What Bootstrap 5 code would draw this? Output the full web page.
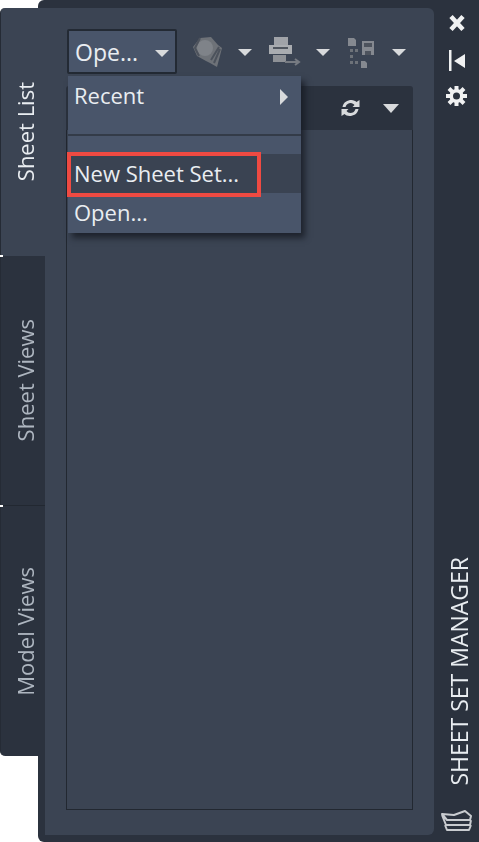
<!DOCTYPE html>
<html lang="en">
<head>
    <meta charset="UTF-8">
    <meta name="viewport" content="width=device-width, initial-scale=1.0">
    <title>Sheet Set Manager</title>
    <link rel="stylesheet" href="https://cdn.jsdelivr.net/npm/bootstrap@5.3.0/dist/css/bootstrap.min.css">
    <style>
        html, body {
            height: 100%;
            background: #fff;
            overflow: hidden;
        }

        body {
            font-family: "Open Sans", "Noto Sans", sans-serif;
            color: #e9edf1;
        }

        .ssm-frame {
            height: 842px;
            margin-left: 38px;
            background: #2b323e;
            border-radius: 6px 0 0 6px;
        }

        .ssm-tabs {
            width: 45px;
            margin-left: -38px;
            margin-top: 8px;
            flex: none;
        }

        .ssm-tab {
            position: relative;
            height: 250px;
            padding-left: 4px;
            background: #2b323e;
            border-bottom: 1px solid #222831;
            color: #aeb6c0;
            font-size: 22px;
            border-left: 1px solid #252b35;
        }

        .ssm-tab span {
            writing-mode: vertical-rl;
            transform: rotate(180deg);
        }

        .ssm-tab::before {
            content: "";
            position: absolute;
            left: -1px;
            top: -1px;
            width: 3px;
            height: 2px;
            background: #fff;
        }

        .ssm-tab.active-tab {
            height: 248px;
            background: #3b4453;
            color: #e9edf1;
            border-radius: 5px 0 0 0;
            border-bottom: 0;
        }

        .ssm-tab.active-tab::before {
            display: none;
        }

        .ssm-tab.last-tab {
            border-radius: 0 0 0 5px;
            border-bottom: 0;
        }

        .ssm-panel {
            position: relative;
            margin: 8px 0 7px;
            padding: 21px 21px 25px;
            background: #3b4453;
            border-radius: 0 6px 6px 0;
            min-width: 0;
        }

        .ssm-open {
            width: 110px;
            height: 45px;
            margin-left: 1px;
            padding: 2px 6px 0 6px;
            background: #49556a;
            border: 2px solid #232a34;
            border-radius: 2px;
            color: #e9edf1;
            font-size: 23px;
            line-height: 1;
            flex: none;
        }

        .ssm-caret {
            width: 0;
            height: 0;
            margin-top: 2px;
            border-left: 7px solid transparent;
            border-right: 7px solid transparent;
            border-top: 7px solid #d8dadc;
            flex: none;
        }

        .ssm-caret.big {
            margin-top: 0;
            border-left-width: 8px;
            border-right-width: 8px;
            border-top-width: 9px;
        }

        .ssm-tool {
            display: block;
            flex: none;
            filter: blur(.7px);
        }

        .ssm-gap-a { margin-left: 15px; }
        .ssm-gap-b { margin-left: 14px; }
        .ssm-gap-c { margin-left: 17px; }

        .ssm-list-head {
            height: 44px;
            margin-top: 12px;
            padding-right: 14px;
            background: #2b323e;
            border-radius: 3px 3px 0 0;
            gap: 21px;
        }

        .ssm-list-body {
            border: 1px solid #222831;
            border-top: 0;
            background: #3b4453;
        }

        .ssm-menu.dropdown-menu {
            display: block;
            top: 68px;
            left: 23px;
            width: 233px;
            height: 157px;
            padding: 0;
            margin: 0;
            background: #49556a;
            border: 0;
            border-radius: 0;
            box-shadow: 4px 5px 6px rgba(20, 24, 32, .75);
            font-size: 22px;
        }

        .ssm-menu .dropdown-item {
            height: 39px;
            padding: 0 5px 0 6px;
            color: #e9edf1;
            line-height: 39px;
        }

        .ssm-menu .ssm-recent {
            height: 58px;
            line-height: 40px;
            margin-top: -1px;
        }

        .ssm-menu .ssm-gap {
            height: 18px;
        }

        .ssm-menu .ssm-hover {
            position: relative;
            background: #3a4352;
        }

        .ssm-menu .dropdown-divider {
            margin: 1px 0 0;
            border-top: 2px solid #333b48;
            opacity: 1;
        }

        .ssm-arrow {
            width: 0;
            height: 0;
            margin: 14px 8px 0 0;
            border-top: 8px solid transparent;
            border-bottom: 8px solid transparent;
            border-left: 8px solid #d8dadc;
        }

        .ssm-redbox {
            position: absolute;
            left: -1px;
            top: -2px;
            width: 194px;
            height: 45px;
            border: 4px solid #ef4a42;
            pointer-events: none;
        }

        .ssm-strip {
            width: 45px;
            padding: 15px 0 10px;
            flex: none;
        }

        .ssm-strip-gear {
            margin-top: 15px;
        }

        .ssm-strip-pin {
            margin-top: 19px;
        }

        .ssm-title {
            writing-mode: vertical-rl;
            transform: rotate(180deg);
            margin-left: 5px;
            font-size: 23px;
            line-height: 1;
            color: #e9edf1;
            white-space: nowrap;
        }

        .ssm-stack {
            margin-top: 24px;
            filter: blur(.5px);
        }
    </style>
</head>
<body>
    <div class="ssm-frame d-flex">
        <div class="ssm-tabs d-flex flex-column">
            <div class="ssm-tab active-tab d-flex align-items-center justify-content-center"><span>Sheet List</span></div>
            <div class="ssm-tab d-flex align-items-center justify-content-center"><span>Sheet Views</span></div>
            <div class="ssm-tab last-tab d-flex align-items-center justify-content-center"><span>Model Views</span></div>
        </div>

        <div class="ssm-panel flex-grow-1 d-flex flex-column">
            <div class="d-flex align-items-center">
                <button type="button" class="ssm-open btn d-flex align-items-center justify-content-between">
                    <span>Ope...</span><i class="ssm-caret"></i>
                </button>
                <svg class="ssm-tool ssm-gap-a" width="32" height="32" viewBox="0 0 32 32">
                    <path d="M1 11 8 2l11-1 7 8 4 3-5 19-7-4-4-2-9-5z" fill="#6e7278"/>
                    <circle cx="13" cy="12" r="8" fill="#7f8389"/>
                    <path d="M8 2 3 12l4 8M19 24l8-13M22 27l6-14" fill="none" stroke="#4c525c" stroke-width="2"/>
                </svg>
                <i class="ssm-caret ssm-gap-b"></i>
                <svg class="ssm-tool ssm-gap-c" width="32" height="32" viewBox="0 0 32 32">
                    <path d="M5 1h14v8H5z" fill="#a0a3a8"/>
                    <path d="M0 9h23v9H0z" fill="#a9acb0"/>
                    <path d="M4 12h15" stroke="#50565f" stroke-width="2"/>
                    <path d="M4 19h13v7H4z" fill="#8e9196"/>
                    <path d="M16 26h14m-4-3 4 3-4 3" fill="none" stroke="#777b82" stroke-width="2"/>
                </svg>
                <i class="ssm-caret ssm-gap-a"></i>
                <svg class="ssm-tool ssm-gap-c" width="28" height="32" viewBox="0 0 28 32">
                    <path d="M1 2h6l2 2v6H1zM14 25h4l2 2v5h-6z" fill="#858990"/>
                    <path d="M15 5h12v14H15z" fill="#858990"/>
                    <path d="M17 7h8v4h-8zM18 15h6v4h-6z" fill="#4d535d"/>
                    <path d="M3 13h3v3H3zM8 13h3v3H8zM3 19h3v3H3zM3 25h3v3H3zM8 25h3v3H8z" fill="#6d7279"/>
                </svg>
                <i class="ssm-caret ssm-gap-c"></i>
            </div>

            <div class="ssm-list-head d-flex align-items-center justify-content-end">
                <svg width="23" height="18" viewBox="0 0 22 18">
                    <path d="M3 8C4 3 8 1 12 1c2 0 4 1 5 2l3-2v7h-7l2-2c-1-1-2-2-4-2-2 0-4 1-5 4zM19 10c-1 5-5 7-9 7-2 0-4-1-5-2l-3 2v-7h7l-2 2c1 1 2 2 4 2 2 0 4-1 5-4z" fill="#d8dadc"/>
                </svg>
                <i class="ssm-caret big"></i>
            </div>
            <div class="ssm-list-body flex-grow-1"></div>

            <ul class="ssm-menu dropdown-menu show list-unstyled">
                <li>
                    <a class="dropdown-item ssm-recent d-flex justify-content-between" href="#">Recent<i class="ssm-arrow"></i></a>
                </li>
                <li><hr class="dropdown-divider"></li>
                <li class="ssm-gap"></li>
                <li class="ssm-hover">
                    <a class="dropdown-item" href="#">New Sheet Set...</a>
                    <div class="ssm-redbox"></div>
                </li>
                <li><a class="dropdown-item" href="#">Open...</a></li>
            </ul>
        </div>

        <div class="ssm-strip d-flex flex-column align-items-center">
            <svg width="18" height="16" viewBox="0 0 18 16">
                <path d="M3 1.500l12 13M15 1.500l-12 13" stroke="#f0f1f2" stroke-width="4.500"/>
            </svg>
            <svg class="ssm-strip-pin" width="18" height="21" viewBox="0 0 18 21">
                <path d="M1 0h2.500v21H1zM6 11l11-7v14z" fill="#f0f1f2"/>
            </svg>
            <svg class="ssm-strip-gear" width="21" height="20" viewBox="0 0 21 20">
                <path d="M10.500 0v20M0 10h21M3 2.500l15 15M18 2.500l-15 15" stroke="#f0f1f2" stroke-width="4"/>
                <circle cx="10.500" cy="10" r="7" fill="#f0f1f2"/>
                <circle cx="10.500" cy="10" r="3.500" fill="#2b323e"/>
            </svg>
            <span class="ssm-title mt-auto">SHEET SET MANAGER</span>
            <svg class="ssm-stack" width="32" height="22" viewBox="0 0 32 22">
                <path d="M1 4l12 1 11-4 6 5-1 4H6zM1 5l2 5 2 5h24l1-5M4 15l2 5h22l2-5" fill="none" stroke="#c9ccd0" stroke-width="2" stroke-linejoin="round"/>
            </svg>
        </div>
    </div>
    <script src="https://cdn.jsdelivr.net/npm/bootstrap@5.3.0/dist/js/bootstrap.bundle.min.js"></script>
</body>
</html>
